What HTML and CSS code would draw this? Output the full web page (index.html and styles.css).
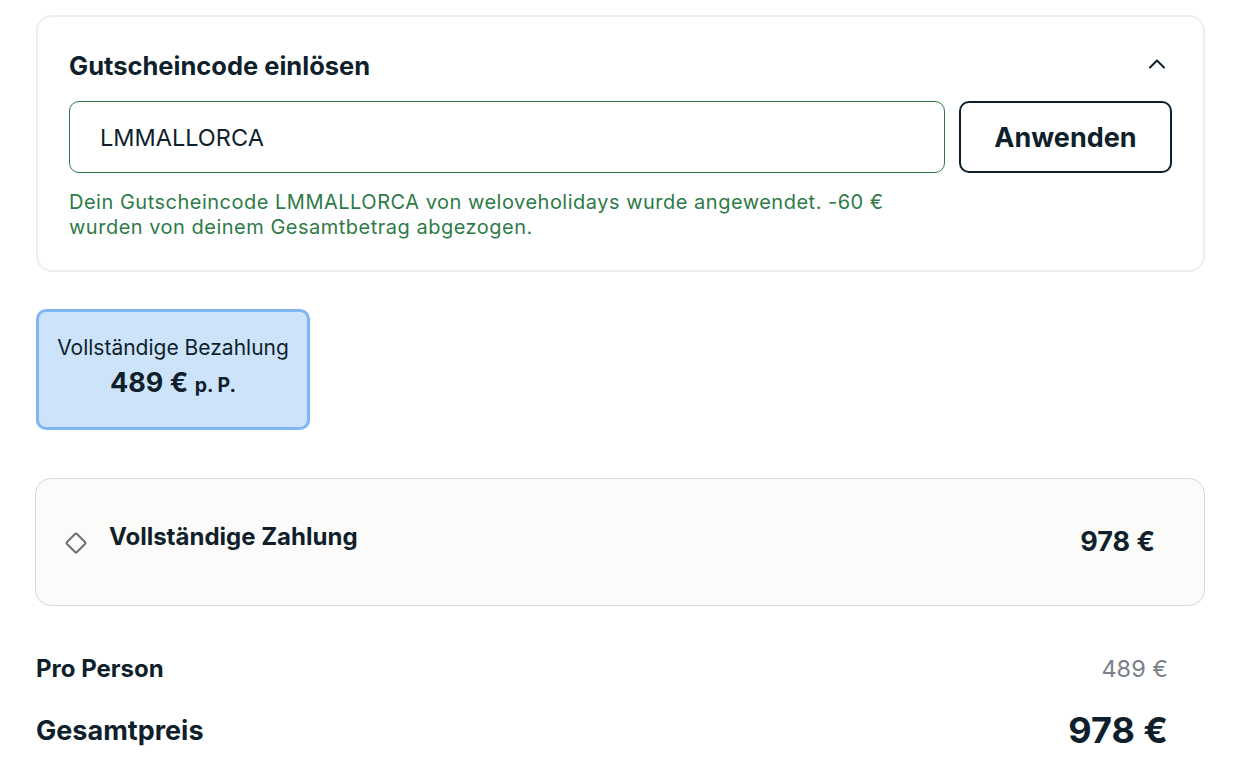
FILE: index.html
```html
<!DOCTYPE html>
<html lang="de">
<head>
<meta charset="utf-8">
<title>Zahlung</title>
<link rel="stylesheet" href="styles.css">
</head>
<body>
<main class="page">
  <section class="voucher">
    <div class="voucher-head">
      <h2 class="voucher-title">Gutscheincode einlösen</h2>
      <svg class="chevron" width="24" height="24" viewBox="0 0 24 24" aria-hidden="true">
        <polyline points="5,15.5 12,8.5 19,15.5" fill="none" stroke="#0f1f2c" stroke-width="2" stroke-linecap="round" stroke-linejoin="round"/>
      </svg>
    </div>
    <div class="voucher-form">
      <div class="voucher-input">LMMALLORCA</div>
      <button class="voucher-btn" type="button">Anwenden</button>
      <p class="voucher-msg">Dein Gutscheincode LMMALLORCA von weloveholidays wurde angewendet. -60 € wurden von deinem Gesamtbetrag abgezogen.</p>
    </div>
  </section>

  <div class="tiles">
    <div class="tile">
      <div class="tile-label">Vollständige Bezahlung</div>
      <div class="tile-price">489 € <span class="tile-pp">p. P.</span></div>
    </div>
  </div>

  <section class="option">
    <div class="option-left">
      <span class="diamond"></span>
      <span class="option-title">Vollständige Zahlung</span>
    </div>
    <span class="option-price">978 €</span>
  </section>

  <section class="summary">
    <div class="sum-row">
      <span class="sum-label">Pro Person</span>
      <span class="sum-pp">489 €</span>
    </div>
    <div class="sum-row total">
      <span class="sum-label big">Gesamtpreis</span>
      <span class="sum-total">978 €</span>
    </div>
  </section>
</main>
</body>
</html>
```

FILE: styles.css
```css
* { box-sizing: border-box; }
html, body { margin: 0; padding: 0; background: #ffffff; }
body {
  font-family: Inter, "Noto Sans", "Liberation Sans", sans-serif;
  color: #0f1f2c;
}
.page {
  width: 1248px;
  padding: 15px 43px 0 35px;
}
.voucher {
  margin-left: 1px;
  border: 2px solid #efefe9;
  border-radius: 16px;
  padding: 34px 31px 30px 31px;
}
.voucher-head {
  display: flex;
  align-items: center;
  justify-content: space-between;
  height: 30px;
}
.voucher-title {
  margin: 0;
  font-size: 25.5px;
  line-height: 30px;
  font-weight: 700;
}
.chevron { margin-right: 3px; margin-top: -4px; }
.voucher-form {
  margin-top: 20px;
  display: grid;
  grid-template-columns: 876px 213px;
  column-gap: 14px;
}
.voucher-input {
  height: 72px;
  border: 1px solid #2e7a48;
  border-radius: 10px;
  padding: 0 30px;
  display: flex;
  align-items: center;
  font-size: 23.5px;
  color: #0f1f2c;
}
.voucher-btn {
  height: 72px;
  border: 2px solid #0f1f2c;
  border-radius: 10px;
  background: #ffffff;
  font-family: inherit;
  font-size: 27px;
  font-weight: 700;
  color: #0f1f2c;
  cursor: pointer;
}
.voucher-msg {
  grid-column: 1;
  margin: 17px 0 0 0;
  font-size: 20px;
  line-height: 25px;
  color: #2e7a48;
  letter-spacing: 0.5px;
}
.tiles {
  margin-top: 37px;
  display: flex;
}
.tile {
  margin-left: 1px;
  width: 274px;
  height: 121px;
  background: #cde3fa;
  border: 3px solid #80b6f4;
  border-radius: 10px;
  display: flex;
  flex-direction: column;
  align-items: center;
  padding-top: 22px;
}
.tile-label {
  font-size: 21px;
  line-height: 28px;
  color: #0f1f2c;
}
.tile-price {
  margin-top: 5px;
  font-size: 27px;
  line-height: 32px;
  font-weight: 700;
}
.tile-pp {
  font-size: 19.5px;
  font-weight: 700;
}
.option {
  margin-top: 48px;
  height: 128px;
  background: #fbfbf9;
  border: 1px solid #d9d9d7;
  border-radius: 16px;
  display: flex;
  align-items: center;
  justify-content: space-between;
  padding: 0 49px 0 31px;
}
.option-left {
  display: flex;
  align-items: center;
  gap: 25px;
  margin-top: -10px;
}
.diamond {
  width: 16px;
  height: 16px;
  border: 2px solid #6b7177;
  border-radius: 2px;
  transform: rotate(45deg);
  margin-left: 1px;
  margin-top: 12px;
}
.option-title {
  font-size: 24px;
  font-weight: 700;
  line-height: 30px;
}
.option-price {
  font-size: 27px;
  font-weight: 700;
  line-height: 30px;
}
.summary {
  padding: 0 37px 0 1px;
}
.sum-row {
  display: flex;
  justify-content: space-between;
  align-items: center;
}
.sum-row:first-child { margin-top: 47px; height: 30px; }
.sum-row.total { margin-top: 27px; height: 40px; }
.sum-label {
  font-size: 24px;
  font-weight: 700;
}
.sum-label.big { font-size: 27px; }
.sum-pp {
  font-size: 23.5px;
  color: #7a8088;
}
.sum-total {
  font-size: 36px;
  font-weight: 700;
}
```
